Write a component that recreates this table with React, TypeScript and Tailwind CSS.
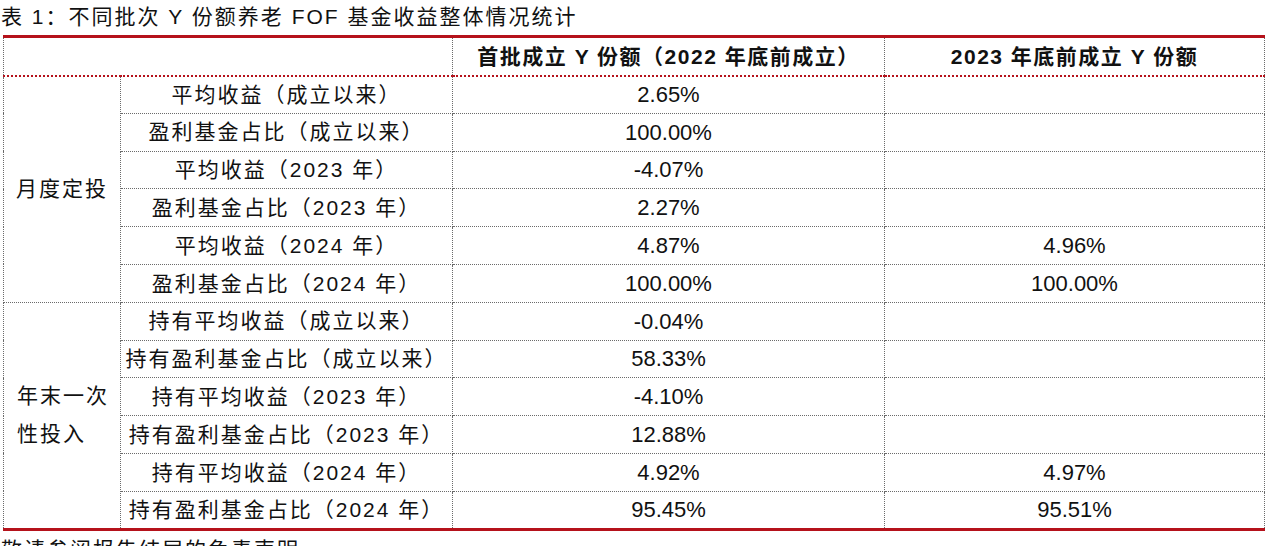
const rows = [
  { label: "平均收益（成立以来）", a: "2.65%", b: "" },
  { label: "盈利基金占比（成立以来）", a: "100.00%", b: "" },
  { label: "平均收益（2023 年）", a: "-4.07%", b: "" },
  { label: "盈利基金占比（2023 年）", a: "2.27%", b: "" },
  { label: "平均收益（2024 年）", a: "4.87%", b: "4.96%" },
  { label: "盈利基金占比（2024 年）", a: "100.00%", b: "100.00%" },
  { label: "持有平均收益（成立以来）", a: "-0.04%", b: "" },
  { label: "持有盈利基金占比（成立以来）", a: "58.33%", b: "" },
  { label: "持有平均收益（2023 年）", a: "-4.10%", b: "" },
  { label: "持有盈利基金占比（2023 年）", a: "12.88%", b: "" },
  { label: "持有平均收益（2024 年）", a: "4.92%", b: "4.97%" },
  { label: "持有盈利基金占比（2024 年）", a: "95.45%", b: "95.51%" },
];

const cell = "border border-dotted border-[#6b6b6b] p-0 text-center align-middle";
const head = cell + " border-b-2 border-b-[#b5121b] border-t-[3px] border-t-[#b5121b]";

export default function App() {
  return (
    <div className="h-[546px] w-[1280px] overflow-hidden bg-white text-[#111] font-['Liberation_Sans','Noto_Sans_CJK_SC',sans-serif]">
      <div className="h-[35px] pt-[3px] pl-[1px] text-[21px] leading-[28px] tracking-[2px]">
        表 1：不同批次 Y 份额养老 FOF 基金收益整体情况统计
      </div>
      <table className="ml-[3px] w-[1261px] table-fixed border-collapse border-t-[3px] border-b-[3px] border-t-[#b5121b] border-b-[#b5121b]">
        <colgroup>
          <col className="w-[117px]" />
          <col className="w-[332px]" />
          <col className="w-[432px]" />
          <col className="w-[380px]" />
        </colgroup>
        <thead>
          <tr className="h-[39px] text-[21px] font-bold">
            <th colSpan={2} className={head} />
            <th className={head + " tracking-[1.5px]"}>首批成立 Y 份额（2022 年底前成立）</th>
            <th className={head + " tracking-[1.5px]"}>2023 年底前成立 Y 份额</th>
          </tr>
        </thead>
        <tbody>
          {rows.map((r, i) => (
            <tr key={r.label} className="h-[37.8px] text-[21px]">
              {i === 0 && (
                <td rowSpan={6} className={cell}>
                  <span className="tracking-[2px]">月度定投</span>
                </td>
              )}
              {i === 6 && (
                <td rowSpan={6} className={cell}>
                  <div className="inline-block pl-[2px] text-left leading-[38px] tracking-[2px]">
                    年末一次
                    <br />
                    性投入
                  </div>
                </td>
              )}
              <td className={cell + " tracking-[2px]"}>{r.label}</td>
              <td className={cell + " text-[22px]"}>{r.a}</td>
              <td className={cell + " text-[22px]"}>{r.b}</td>
            </tr>
          ))}
        </tbody>
      </table>
      <div className="pt-[6px] pl-[1px] text-[21px] leading-[26px] tracking-[2px]">
        敬请参阅报告结尾的免责声明
      </div>
    </div>
  );
}
